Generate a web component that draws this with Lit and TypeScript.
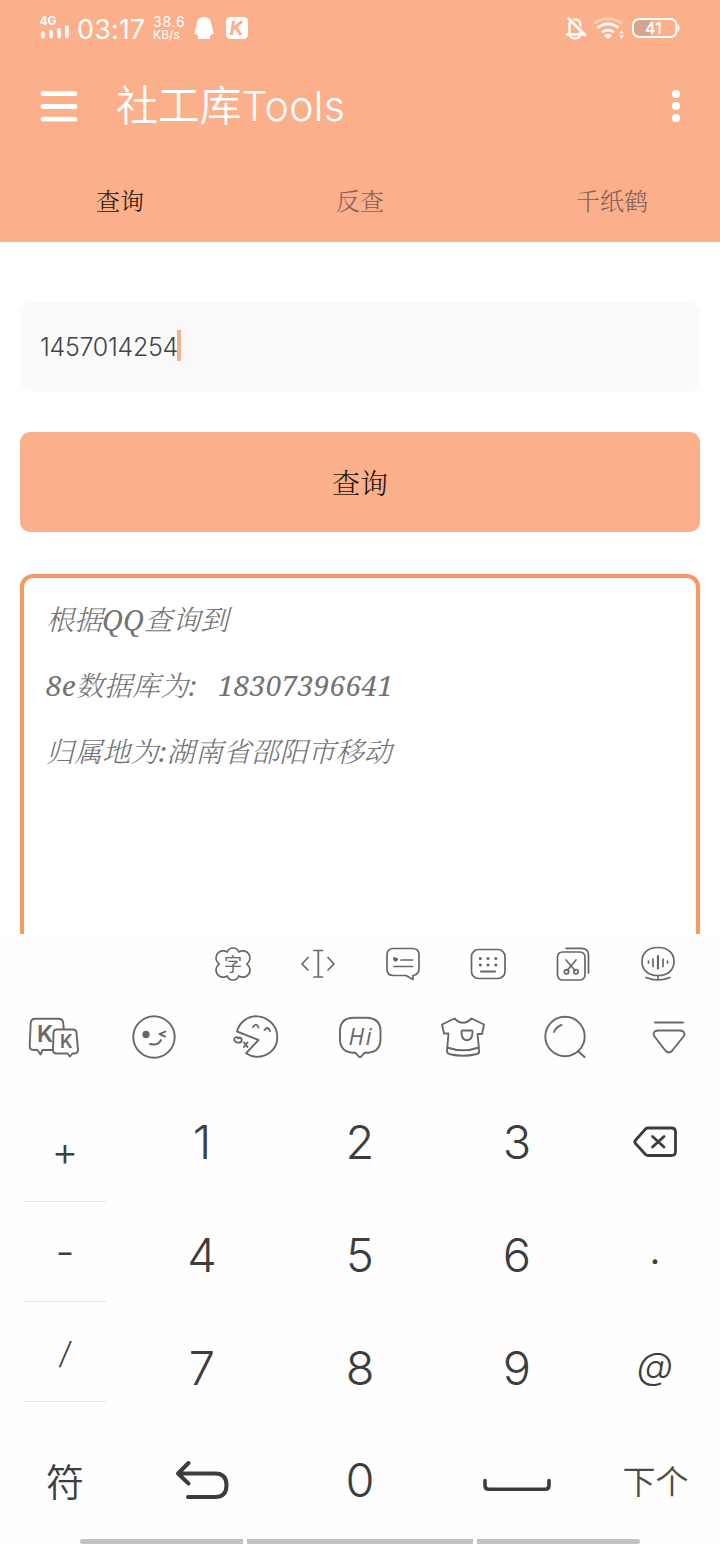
import { LitElement, html, css, svg } from "lit";
import { customElement } from "lit/decorators.js";

// Every glyph is drawn in screen units; its view box is the cell that holds it.
const icon = (x: number, y: number, w: number, h: number, body: unknown) =>
  html`<svg width=${w} height=${h} viewBox="${x} ${y} ${w} ${h}">${body}</svg>`;

@customElement("status-bar")
class StatusBar extends LitElement {
  static styles = css`
    :host { display: flex; height: 56px; color: #fff; font-family: Inter, Roboto, sans-serif; }
    svg { display: block; flex: none; }
    .time { width: 76px; font-size: 27px; line-height: 59px; white-space: nowrap; letter-spacing: 0.1px; }
    .rate { width: 37px; padding-top: 15px; font-size: 14px; line-height: 14px; white-space: nowrap; letter-spacing: 0.8px; }
    .unit { font-size: 12px; line-height: 12px; letter-spacing: 0.1px; }
    .gap { flex: 1; }
    .g4 { font: 700 12px Inter, sans-serif; }
    .lvl { font: 500 16px Inter, sans-serif; }
  `;
  render() {
    return html`
      ${icon(0, 0, 77, 56, svg`<text class="g4" x="39.5" y="24.5" fill="#fff" textLength="17">4G</text>
        <path stroke="#fff" stroke-width="3.6" stroke-linecap="round" d="M43 33v3.8M51 31.5v5.3M59 29.5v7.3M67 27v9.8"/>`)}
      <div class="time">03:17</div>
      <div class="rate"><div>38.6</div><div class="unit">KB/s</div></div>
      ${icon(190, 0, 70, 56, svg`<path fill="#fff" d="M204 17c5 0 7.500 3.500 7.500 8.500 1 3 2 5.500 1.800 8.500-.8.500-1.500-.2-2-.8-.4 1.800-1 3-2 4 1.300.8 1 1.800-.5 1.800h-9.600c-1.500 0-1.800-1-.5-1.800-1-1-1.600-2.200-2-4-.5.600-1.200 1.300-2 .8-.2-3 .8-5.500 1.800-8.500 0-5 2.500-8.500 7.500-8.500z"/>
        <rect x="226" y="17" width="22" height="22" rx="4.500" fill="#fff"/>
        <path fill="none" stroke="#fbaf8a" stroke-width="3" d="M233.500 21 231.300 35M242 21.300l-9 7.700M235.800 27l5 8"/>`)}
      <div class="gap"></div>
      ${icon(560, 0, 160, 56, svg`<g fill="none" stroke="#fff" stroke-width="2.400" stroke-linecap="round" stroke-linejoin="round">
        <path d="M567 34.500h17M569.500 33.500v-8c0-4 2-6 5.500-6s5.500 2 5.500 6v8M570.500 36.500c1.500 2.500 7.500 2.500 9 0"/>
        <path stroke="#fbaf8a" stroke-width="1.500" d="m570.500 17.500 15 15"/><path stroke-width="2.600" d="m568.500 18.500 16.500 16.500"/></g>
        <g fill="none" stroke="#fff" stroke-width="2.600"><path opacity=".4" d="M594 23.500q14-9.500 28.500 0"/><path d="M597.500 27.800q10.500-8 21 0M602 32.300q6-4.500 12 0"/></g>
        <path fill="#fff" d="M604 35.500q4-3.500 8 0l-4 3.700zM619.300 33.500l2.200-3.500 2.200 3.500zM619.300 35.500l2.200 3.500 2.200-3.500z"/>
        <path fill="#d2a691" d="M640 20h10v16h-10q-6 0-6-8t6-8z"/>
        <rect x="633" y="19" width="43.500" height="18" rx="6" fill="none" stroke="#fff" stroke-width="2"/>
        <path fill="#fff" d="M678 24q3 4 0 8z"/>
        <text class="lvl" x="645" y="34" fill="#fff" textLength="17">41</text>`)}`;
  }
}

@customElement("app-header")
class AppHeader extends LitElement {
  static styles = css`
    :host { display: block; height: 186px; font-family: "Noto Sans CJK SC", sans-serif; }
    .bar { display: flex; height: 102px; }
    svg { display: block; flex: none; }
    .title { flex: 1; color: #fff; font-size: 42px; font-weight: 350; line-height: 94px; letter-spacing: -0.2px; white-space: nowrap; }
    .lat { font-family: Inter, sans-serif; font-size: 41px; font-weight: 330; letter-spacing: 0.3px; }
    .tabs { display: flex; justify-content: space-between; padding: 0 72px 0 96px; font: 300 24px/83px "Noto Serif CJK SC", "Noto Sans CJK SC", serif; color: #7f6257; }
    .on { color: #1c1410; }
  `;
  render() {
    return html`<div class="bar">
        ${icon(0, 56, 116, 102, svg`<path stroke="#fff" stroke-width="4.800" stroke-linecap="round" d="M43 93.700h32M43 106.500h32M43 119.200h32"/>`)}
        <div class="title">社工库<span class="lat">Tools</span></div>
        ${icon(640, 56, 80, 102, svg`<g fill="#fff"><circle cx="676" cy="94" r="4.100"/><circle cx="676" cy="106" r="4.100"/><circle cx="676" cy="118" r="4.100"/></g>`)}
      </div>
      <div class="tabs"><span class="on">查询</span><span>反查</span><span>千纸鹤</span></div>`;
  }
}

@customElement("query-panel")
class QueryPanel extends LitElement {
  static styles = css`
    :host { display: flex; flex-direction: column; box-sizing: border-box; height: 692px; padding: 60px 20px 0; overflow: hidden; }
    .input { display: flex; align-items: center; height: 90px; flex: none; box-sizing: border-box; padding: 0 20px; border-radius: 12px; background: #fafafa; font: 300 25px Inter, sans-serif; color: #444; }
    .num { width: 137px; white-space: nowrap; letter-spacing: -0.3px; }
    .caret { width: 4px; height: 31px; margin-bottom: 4px; background: #f4b08f; }
    .btn { flex: none; margin-top: 40px; height: 100px; border-radius: 10px; background: #fbaf8a; text-align: center; font: 300 28px/100px "Noto Serif CJK SC", "Noto Sans CJK SC", serif; color: #1c1410; }
    .out { margin-top: 42px; height: 420px; flex: none; box-sizing: border-box; border: 4px solid #fa9764; border-radius: 13px; padding: 7px 22px; font: italic 300 28px/66px "Noto Serif CJK SC", "Noto Sans CJK SC", serif; color: #737373; white-space: pre; letter-spacing: 0.15px; }
    .line { height: 66px; }
    .lat { font-family: "Noto Serif", serif; font-weight: 380; }
    .sp { margin-left: 6.500px; letter-spacing: 0.3px; }
  `;
  render() {
    return html`<div class="input"><span class="num">1457014254</span><span class="caret"></span></div>
      <div class="btn">查询</div>
      <div class="out"><div class="line">根据<span class="lat">QQ</span>查询到</div><div class="line"><span class="lat">8e</span>数据库为<span class="lat">:  <span class="sp">18307396641</span></span></div><div class="line">归属地为<span class="lat">:</span>湖南省邵阳市移动</div></div>`;
  }
}

@customElement("key-board")
class KeyBoard extends LitElement {
  static styles = css`
    :host { display: block; height: 610px; background: #fefefe; color: #3d3d3d; font-family: Inter, "Noto Sans CJK SC", sans-serif; font-weight: 300; }
    svg { display: block; flex: none; }
    .tools, .modes { display: flex; fill: none; stroke: #686868; stroke-width: 1.700; stroke-linecap: round; stroke-linejoin: round; }
    .tools { padding-left: 190px; height: 60px; }
    .modes { height: 88px; stroke-width: 1.900; }
    .zi { font: 400 18px "Noto Sans CJK SC", sans-serif; fill: #686868; stroke: none; }
    .kk { font: 600 23px Inter, sans-serif; fill: #686868; stroke: none; }
    .k2 { font-size: 18px; }
    .hi { font: italic 400 23px "Open Sans", sans-serif; fill: #686868; stroke: none; }
    .pad { display: grid; grid-template-columns: 130px 144px 172px 142px 132px; height: 452px; padding-top: 4px; }
    .side { display: flex; flex-direction: column; padding: 16px 24px 0; font-size: 34px; }
    .op { height: 99px; border-bottom: 1px solid #e5e5e5; text-align: center; line-height: 101px; }
    .plus { font-size: 41px; line-height: 99px; }
    .minus { font-size: 42px; line-height: 99px; }
    .slash { font: italic 300 30px/103px Inter, sans-serif; }
    .fu { height: 130px; text-align: center; font: 350 38px/155px "Noto Sans CJK SC", sans-serif; }
    .col { display: grid; grid-template-rows: 112.800px 112.800px 112.800px 112.800px; font-size: 47px; text-align: center; line-height: 112px; }
    .dot { font-size: 36px; font-weight: 400; line-height: 105px; padding-left: 2px; }
    .at { font: italic 350 37px/107px Inter, sans-serif; padding-left: 2px; }
    .next { font: 350 33px/112px "Noto Sans CJK SC", sans-serif; white-space: nowrap; padding-left: 3px; color: #4a4a4a; }
    .nav { display: flex; gap: 4px; padding: 1px 80px 0; }
    .seg { height: 5px; background: #c2c2c2; }
    .a { width: 163px; border-radius: 3px 0 0 3px; }
    .b { width: 226px; }
    .c { width: 163px; border-radius: 0 3px 3px 0; }
  `;
  render() {
    const tool = (x: number, body: unknown) => icon(x, 934, 85, 60, body);
    const mode = (x: number, w: number, body: unknown) => icon(x, 994, w, 88, body);
    return html`
      <div class="tools">
        ${tool(190, svg`<path d="M227.200 952a6.200 6.200 0 0 1 11.600 0a6.800 6.800 0 0 1 8 12a6.800 6.800 0 0 1-8 12a6.200 6.200 0 0 1-11.600 0a6.800 6.800 0 0 1-8-12a6.800 6.800 0 0 1 8-12z"/><text class="zi" x="224" y="970.500">字</text>`)}
        ${tool(275, svg`<path d="M308 957.500l-6 6.500 6 6M328 957.500l6 6.500-6 6M314 950.500h8.500M314 977h8.500M318.300 951v26"/>`)}
        ${tool(360, svg`<path d="M393.500 948.500h19q6.500 0 6.500 6.500v14q0 5.500-6 6.500v4l-7-4h-12.500q-6.500 0-6.500-6.500V955q0-6.500 6.500-6.500zM401 960h11.500M394 966.500h18.500"/><path fill="#686868" stroke="none" d="M393 957.500q2-1.200 3 .5 1.500-1 2.200.8.300 2.200-3 3-2.800-2-2.200-4.300z"/>`)}
        ${tool(445, svg`<rect x="471.500" y="949.500" width="33.500" height="29" rx="7"/><path stroke-width="3.200" d="M480.300 958.500h.01M488 958.500h.01M495.800 958.500h.01M480.300 965h.01M488 965h.01M495.800 965h.01"/><path stroke-width="2" d="M481 971.500h14"/>`)}
        ${tool(530, svg`<rect x="557.500" y="952" width="27.500" height="28" rx="5"/><path d="M566 948.300h15.500q7 0 7 7V973M566 960l9 10.500M576 960l-9 10.500"/><circle cx="566.500" cy="971.700" r="2.200"/><circle cx="576" cy="971.700" r="2.200"/>`)}
        ${tool(615, svg`<path d="M658 947.500c11 0 16 6.500 16 14s-5 14-16 14-16-6.500-16-14 5-14 16-14zM658 976v4M646 977.500q12 5 24 0M648.500 961v2M653 959v7.500M663 959v7.500M667.500 961v2"/><path stroke-width="2.200" d="M658 956v12.500"/>`)}
      </div>
      <div class="modes">
        ${mode(0, 103, svg`<path d="M52.500 1050H42.500l-2 4.500-3-4.500h-4q-4-.3-3.800-4l1-23q.3-4.300 4.500-4.300h23.300q4.500 0 4.700 4.300l.5 5.500M56.500 1029.500h16.500q3.300 0 3.500 3.300l1.500 17q0 3.500-3.500 3.700h-2l-2.500 3-2.500-3H56.500q-3.700-.2-3.500-3.700l.5-17q.2-3.300 3-3.300z"/><text class="kk" x="37" y="1042">K</text><text class="kk k2" x="60" y="1048">K</text>`)}
        ${mode(103, 103, svg`<circle cx="154" cy="1037" r="20.700"/><circle cx="146" cy="1034.500" r="2.700" fill="#686868"/><path d="M165.500 1031.500l-6 2.700 5.500 2.300M150 1044q8 2 11-4"/>`)}
        ${mode(206, 103, svg`<path d="M237 1031.500c2-8 9-15 18.500-15.200 11-.2 21.500 8 21.800 20.500.2 14-12 20.500-21.300 20-4-.2-7-1.500-10-3.500L258.500 1040zM253 1027q3.500-5 5.500.5M264.500 1030q3.500-4.500 5.500 1M244 1042.500l3.500 4.500M247.500 1042.500l-3.500 4.500M240 1037.500q2.500 1 1.200 4.500-4 1.500-6-.500-2-3 .3-4 1.700-1 2.300.800z"/>`)}
        ${mode(309, 103, svg`<path d="M354 1017.700h12q14.500 0 14.500 13.500v8q0 12-12 13.500h-3.500c-2 .300-3 4.500-5 4.500s-3-4.200-5-4.500H352q-12-1.500-12-13.500v-8q0-13.500 14-13.500z"/><text class="hi" x="348.500" y="1044.500" textLength="23">Hi</text>`)}
        ${mode(412, 103, svg`<path d="M454.500 1018.500l-12.500 6 2 9h4.500l-1.500 17.500q0 2.500 3 3.300 13 3 26 0 3.500-1 3.200-3.300L477.500 1034h4.500l2-9.500-12.500-6q-8.500 8.500-17 0zM447 1047.500q16 5.500 32 0M462.500 1030.500h9q1 0 1 1.300 0 8.500-5.500 8.500t-5.500-8.500q0-1.300 1-1.300z"/>`)}
        ${mode(515, 103, svg`<circle cx="565" cy="1036.500" r="19.700"/><path d="M578 1051l6.500 6M554 1032q2-5 7.500-7"/>`)}
        ${mode(618, 102, svg`<path d="M655 1022.500h28M658 1030.500h22q5.500.500 4.300 5l-12 15q-3.500 4-7 0l-11.500-15q-1.200-4.500 4.200-5z"/>`)}
      </div>
      <div class="pad">
        <div class="side"><div class="op plus">+</div><div class="op minus">-</div><div class="op slash">/</div><div class="fu">符</div></div>
        <div class="col"><div>1</div><div>4</div><div>7</div>
          ${icon(130, 1425, 144, 112, svg`<path fill="none" stroke="#3d3d3d" stroke-width="4" stroke-linecap="round" stroke-linejoin="round" d="M188.500 1464l-10.500 10.500 10.500 10M178 1474.500h37q11.500 0 11.500 11.700T215 1498h-27"/>`)}</div>
        <div class="col"><div>2</div><div>5</div><div>8</div><div>0</div></div>
        <div class="col"><div>3</div><div>6</div><div>9</div>
          ${icon(446, 1425, 142, 112, svg`<path fill="none" stroke="#3d3d3d" stroke-width="3.600" stroke-linecap="round" d="M485 1481.500v5q0 3.800 4 3.800h56q4 0 4-3.800v-5"/>`)}</div>
        <div class="col">
          ${icon(588, 1086, 132, 112.800, svg`<path fill="none" stroke="#3d3d3d" stroke-width="2.800" stroke-linecap="round" stroke-linejoin="round" d="M648 1128h23.500q4 0 4 4v19.500q0 4-4 4H648q-1.500 0-2.500-1l-10-11q-1.500-1.500 0-3.200l10-11.300q1-1 2.500-1zM652.500 1136.500l11.500 10.500M664 1136.500l-11.500 10.500"/>`)}
          <div class="dot">.</div><div class="at">@</div><div class="next">下个</div></div>
      </div>
      <div class="nav"><div class="seg a"></div><div class="seg b"></div><div class="seg c"></div></div>`;
  }
}

@customElement("app-root")
class AppRoot extends LitElement {
  static styles = css`
    :host { display: block; width: 720px; height: 1544px; overflow: hidden; background: #fff; }
    .top { height: 242px; background: #fbaf8a; }
  `;
  render() {
    return html`<div class="top"><status-bar></status-bar><app-header></app-header></div>
      <query-panel></query-panel><key-board></key-board>`;
  }
}
